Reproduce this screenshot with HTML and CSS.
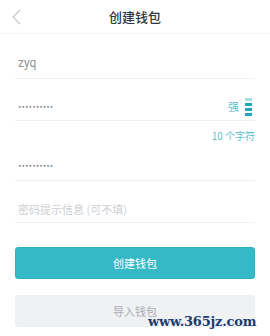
FILE: index.html
```html
<!DOCTYPE html>
<html lang="zh">
<head>
<meta charset="utf-8">
<link rel="stylesheet" href="styles.css">
</head>
<body>
<div class="page">
  <header class="header">
    <svg class="back" width="10" height="16" viewBox="0 0 10 16"><path d="M9 1 L2 8 L9 15" fill="none" stroke="#c4c7cc" stroke-width="1.2"/></svg>
    <div class="title">创建钱包</div>
  </header>
  <div class="form">
    <div class="field f-name"><span class="val">zyq</span></div>
    <div class="field f-pass">
      <span class="dots">••••••••••</span>
      <span class="strength">
        <span class="lbl">强</span>
        <span class="bars"><i class="light"></i><i></i><i></i><i></i></span>
      </span>
    </div>
    <div class="hint-count">10 个字符</div>
    <div class="field f-pass2"><span class="dots">••••••••••</span></div>
    <div class="field f-hint"><span class="ph">密码提示信息 (可不填)</span></div>
    <button class="btn primary">创建钱包</button>
    <button class="btn secondary">导入钱包</button>
  </div>
  <div class="watermark">www.365jz.com</div>
</div>
</body>
</html>
```
FILE: styles.css
```css
* { box-sizing: border-box; }
html, body { margin: 0; padding: 0; background: #fff; }
body { font-family: "Noto Sans CJK SC", "Noto Sans", sans-serif; }
.page { width: 270px; height: 336px; position: relative; overflow: hidden; }
.header { height: 34px; border-bottom: 1px solid #f4f4f5; display: flex; align-items: center; justify-content: center; position: relative; }
.back { position: absolute; left: 11px; top: 9px; }
.title { font-size: 13px; font-weight: 500; color: #2f3640; line-height: 20px; margin-top: 0; }
.form { padding: 0 15px; display: flex; flex-direction: column; }
.field { height: 45px; border-bottom: 1px solid #f0f0f2; display: flex; align-items: flex-end; padding: 0 3px 8px; position: relative; }
.f-name { height: 45px; }
.val { font-size: 12px; color: #8e9299; line-height: 14px; font-family: "Roboto", sans-serif; }
.dots { font-size: 6px; color: #6d737c; letter-spacing: 0; line-height: 10px; font-family: "DejaVu Sans", sans-serif; }
.f-pass { height: 42px; padding-bottom: 8px; }
.strength { position: absolute; right: 3px; bottom: 4px; display: flex; align-items: flex-end; gap: 6px; }
.lbl { font-size: 11px; color: #5bc1cc; line-height: 13px; margin-bottom: 3px; }
.bars { display: flex; flex-direction: column; gap: 2px; }
.bars i { display: block; width: 7px; height: 3px; background: #1fa8ba; }
.bars i.light { background: #a6e0e6; }
.hint-count { text-align: right; font-size: 10px; color: #5bbfca; line-height: 12px; margin-top: 9px; }
.f-pass2 { height: 39px; padding-bottom: 9px; }
.f-hint { height: 42px; padding-bottom: 6px; }
.ph { font-size: 11px; color: #cdd0d4; line-height: 14px; }
.btn { height: 32px; border-radius: 3px; font-family: inherit; font-size: 11px; display: flex; align-items: center; justify-content: center; padding: 0; }
.primary { margin-top: 24px; background: #35b9c7; border: 1px solid #2eb0bf; color: #fff; }
.secondary { margin-top: 16px; background: #f0f1f3; border: none; color: #a9acb1; }
.watermark { position: absolute; left: 148px; top: 313px; font-family: "DejaVu Serif", serif; font-weight: bold; font-size: 13px; color: #1b3c70; letter-spacing: -0.2px; line-height: 18px; }
```
